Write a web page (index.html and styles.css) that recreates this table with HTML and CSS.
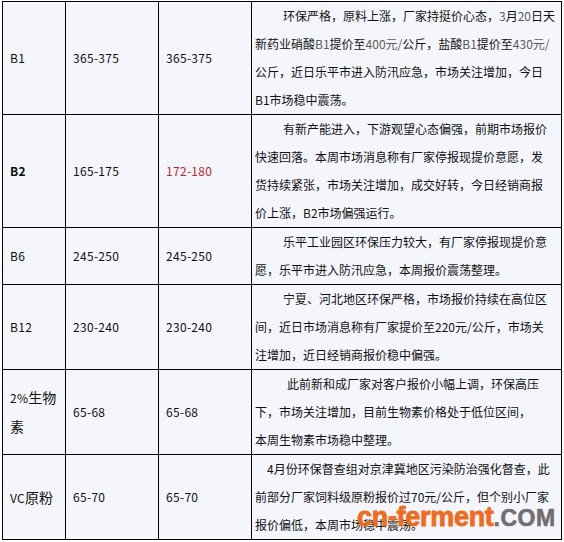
FILE: index.html
```html
<!DOCTYPE html>
<html lang="zh-CN">
<head>
<meta charset="utf-8">
<title>维生素价格表</title>
<link rel="stylesheet" href="styles.css">
</head>
<body>
<div class="wrap">
<table class="price">
<colgroup>
<col class="c1"><col class="c2"><col class="c3"><col class="c4">
</colgroup>
<tbody>
<tr>
<td class="name">B1</td>
<td class="num">365-375</td>
<td class="num">365-375</td>
<td class="desc"><span class="ind">环保严格，原料上涨，厂家持挺价心态，<span class="g">3</span>月<span class="g">20</span>日天</span><br>新药业硝酸<span class="g">B1</span>提价至<span class="g">400元/</span>公斤，盐酸<span class="g">B1</span>提价至<span class="g">430元/</span><br>公斤，近日乐平市进入防汛应急，市场关注增加，今日<br>B1市场稳中震荡。</td>
</tr>
<tr>
<td class="name bold">B2</td>
<td class="num">165-175</td>
<td class="num red">172-180</td>
<td class="desc"><span class="ind">有新产能进入，下游观望心态偏强，前期市场报价</span><br>快速回落。本周市场消息称有厂家停报现提价意愿，发<br>货持续紧张，市场关注增加，成交好转，今日经销商报<br>价上涨，B2市场偏强运行。</td>
</tr>
<tr>
<td class="name">B6</td>
<td class="num">245-250</td>
<td class="num">245-250</td>
<td class="desc"><span class="ind">乐平工业园区环保压力较大，有厂家停报现提价意</span><br>愿，乐平市进入防汛应急，本周报价震荡整理。</td>
</tr>
<tr>
<td class="name">B12</td>
<td class="num">230-240</td>
<td class="num">230-240</td>
<td class="desc"><span class="ind">宁夏、河北地区环保严格，市场报价持续在高位区</span><br>间，近日市场消息称有厂家提价至220元/公斤，市场关<br>注增加，近日经销商报价稳中偏强。</td>
</tr>
<tr>
<td class="name">2%<span class="zh">生物</span><br><span class="zh">素</span></td>
<td class="num">65-68</td>
<td class="num">65-68</td>
<td class="desc"><span class="ind2">此前新和成厂家对客户报价小幅上调，环保高压</span><br>下，市场关注增加，目前生物素价格处于低位区间，<br>本周生物素市场稳中整理。</td>
</tr>
<tr>
<td class="name">VC<span class="zh">原粉</span></td>
<td class="num">65-70</td>
<td class="num">65-70</td>
<td class="desc"><span class="ind3">4月份环保督查组对京津冀地区污染防治强化督查，此</span><br>前部分厂家饲料级原粉报价过70元/公斤，但个别小厂家<br>报价偏低，本周市场稳中震荡。</td>
</tr>
</tbody>
</table>
<div class="mark"><span class="mark-a">cn-ferment</span><span class="mark-b">.COM</span></div>
</div>
</body>
</html>
```

FILE: styles.css
```css
html, body {
  margin: 0;
  padding: 0;
  background: #ffffff;
}

.wrap {
  position: relative;
  width: 564px;
  height: 542px;
  overflow: hidden;
  padding: 1px 0 0 2px;
  box-sizing: border-box;
}

.price {
  border-collapse: collapse;
  table-layout: fixed;
  width: 559px;
  background: #f5f6fb;
  color: #111;
  font-family: "Noto Sans CJK SC", "Noto Sans", sans-serif;
}

.c1 { width: 63px; }
.c2 { width: 93px; }
.c3 { width: 93px; }
.c4 { width: 310px; }

.price td {
  border: 1px solid #000;
  line-height: 28px;
  vertical-align: middle;
  padding: 0;
}

.name, .num {
  font-size: 12px;
  padding-left: 7px !important;
  letter-spacing: 0.3px;
}

.zh {
  font-size: 14px;
  letter-spacing: 0;
}

.bold {
  font-weight: bold;
}

.red {
  color: #c0282a;
}

.desc {
  font-size: 12px;
  padding: 0 2px 0 3px !important;
  white-space: nowrap;
}

.ind { padding-left: 28px; }
.ind2 { padding-left: 32px; }
.ind3 { padding-left: 12px; }

.g {
  color: #5a5a5a;
}

.mark {
  position: absolute;
  left: 357px;
  top: 499px;
  font-family: "Liberation Sans", Arial, sans-serif;
  font-weight: bold;
  white-space: nowrap;
  line-height: 36px;
}

.mark-a {
  font-size: 27px;
  color: #f26a1b;
  letter-spacing: -0.3px;
  -webkit-text-stroke: 0.8px #f26a1b;
}

.mark-b {
  font-size: 23px;
  color: #707070;
  letter-spacing: 0.5px;
  -webkit-text-stroke: 0.6px #707070;
}
```
